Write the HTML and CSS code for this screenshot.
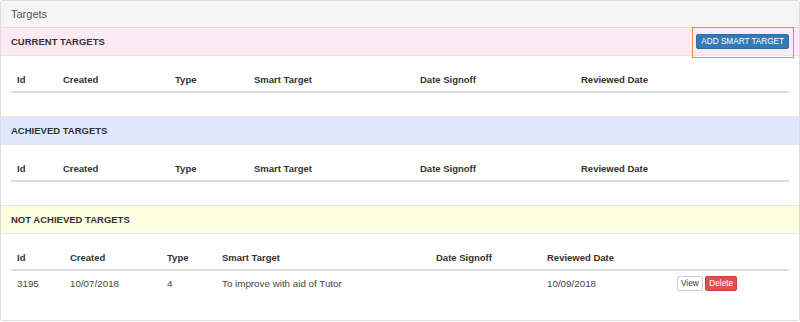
FILE: index.html
```html
<!DOCTYPE html>
<html lang="en">
<head>
  <meta charset="UTF-8" />
  <title>Targets</title>
  <link rel="stylesheet" href="styles.css">
</head>
<body>
  <div class="panel">
    <div class="panel__heading">Targets</div>

    <!-- current -->
    <div class="target-bar target-bar--current">
      <span class="target-bar__title">Current Targets</span>
      <button class="btn btn--primary">ADD SMART TARGET</button>
      <span class="highlight"></span>
    </div>
    <div class="target-body">
      <table class="targets">
        <colgroup>
          <col class="c1"><col class="c2"><col class="c3"><col class="c4"><col class="c5"><col class="c6">
        </colgroup>
        <thead>
          <tr><th>Id</th><th>Created</th><th>Type</th><th>Smart Target</th><th>Date Signoff</th><th>Reviewed Date</th></tr>
        </thead>
        <tbody></tbody>
      </table>
    </div>

    <!-- achieved -->
    <div class="target-bar target-bar--achieved">
      <span class="target-bar__title">Achieved Targets</span>
    </div>
    <div class="target-body">
      <table class="targets">
        <colgroup>
          <col class="c1"><col class="c2"><col class="c3"><col class="c4"><col class="c5"><col class="c6">
        </colgroup>
        <thead>
          <tr><th>Id</th><th>Created</th><th>Type</th><th>Smart Target</th><th>Date Signoff</th><th>Reviewed Date</th></tr>
        </thead>
        <tbody></tbody>
      </table>
    </div>

    <!-- not achieved -->
    <div class="target-bar target-bar--missed">
      <span class="target-bar__title">Not Achieved Targets</span>
    </div>
    <div class="target-body target-body--last">
      <table class="targets targets--rows">
        <colgroup>
          <col class="d1"><col class="d2"><col class="d3"><col class="d4"><col class="d5"><col class="d6"><col class="d7">
        </colgroup>
        <thead>
          <tr><th>Id</th><th>Created</th><th>Type</th><th>Smart Target</th><th>Date Signoff</th><th>Reviewed Date</th><th></th></tr>
        </thead>
        <tbody>
          <tr>
            <td>3195</td>
            <td>10/07/2018</td>
            <td>4</td>
            <td>To improve with aid of Tutor</td>
            <td></td>
            <td>10/09/2018</td>
            <td class="actions">
              <button class="btn btn--default">View</button>
              <button class="btn btn--danger">Delete</button>
            </td>
          </tr>
        </tbody>
      </table>
    </div>
  </div>
</body>
</html>
```

FILE: styles.css
```css
body {
  margin: 0;
  font-family: "Liberation Sans", Arial, sans-serif;
  color: #333;
  background: #fff;
}
.panel {
  width: 798px;
  border: 1px solid #ddd;
  border-radius: 3px;
  overflow: hidden;
}
.panel__heading {
  height: 26px;
  line-height: 26px;
  padding: 0 10px;
  background: #f5f5f5;
  border-bottom: 1px solid #ddd;
  font-size: 11px;
  color: #555;
}

/* section bars */
.target-bar {
  position: relative;
  display: flex;
  align-items: center;
  justify-content: space-between;
  height: 27px;
  padding: 0 10px;
  border-top: 1px solid #e6e6e6;
  border-bottom: 1px solid #e6e6e6;
}
.target-bar--current {
  border-top: none;
  background: #fce9f4;
}
.target-bar--achieved {
  background: #dfe7fb;
}
.target-bar--missed {
  background: #fdfde0;
}
.target-bar__title {
  font-size: 9.5px;
  font-weight: bold;
  text-transform: uppercase;
  color: #333;
}
.highlight {
  position: absolute;
  top: -1px;
  right: 5px;
  width: 100px;
  height: 29px;
  border: 1px solid #ee8a45;
  pointer-events: none;
}

.target-body {
  padding: 12px 10px 12px;
}
.target-body--last {
  padding-bottom: 13px;
}
.targets {
  width: 778px;
  border-collapse: collapse;
  table-layout: fixed;
  margin-bottom: 11px;
  font-size: 9.5px;
}
.targets th {
  text-align: left;
  font-weight: bold;
  color: #333;
  padding: 5px 6px;
  line-height: 13px;
  border-bottom: 2px solid #ddd;
}
.targets td {
  padding: 5px 6px;
  line-height: 13px;
  color: #444;
  font-size: 9.8px;
}
.c1 { width: 46px; }
.c2 { width: 112px; }
.c3 { width: 79px; }
.c4 { width: 166px; }
.c5 { width: 161px; }
.c6 { width: 214px; }

.d1 { width: 53px; }
.d2 { width: 97px; }
.d3 { width: 55px; }
.d4 { width: 214px; }
.d5 { width: 111px; }
.d6 { width: 130px; }
.d7 { width: 118px; }

.actions {
  white-space: nowrap;
}

/* buttons */
.btn {
  font-family: inherit;
  font-size: 8.2px;
  line-height: 11px;
  padding: 1px 3px;
  border: 1px solid transparent;
  border-radius: 2px;
  cursor: pointer;
  vertical-align: middle;
}
.btn--primary {
  background: #337ab7;
  border-color: #2e6da4;
  color: #fff;
  padding: 1px 4px;
}
.btn--default {
  background: #fff;
  border-color: #ccc;
  color: #333;
}
.btn--danger {
  background: #d9534f;
  border-color: #d43f3a;
  color: #fff;
}
```
